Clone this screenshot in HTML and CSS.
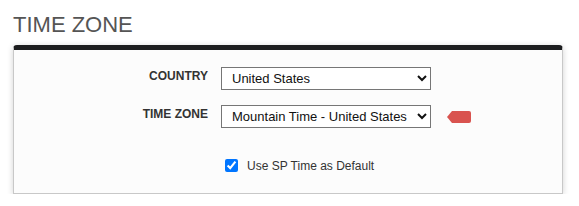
FILE: index.html
```html
<!DOCTYPE html>
<html>
<head>
<meta charset="utf-8">
<link rel="stylesheet" href="styles.css">
</head>
<body>
<h2 class="title">TIME ZONE</h2>
<div class="panel">
  <div class="form">
    <label class="label" for="country">COUNTRY</label>
    <div class="field">
      <select id="country" class="select">
        <option>United States</option>
      </select>
    </div>
    <label class="label" for="tz">TIME ZONE</label>
    <div class="field">
      <select id="tz" class="select">
        <option>Mountain Time - United States</option>
      </select>
      <svg class="tag" width="24" height="12" viewBox="0 0 24 12"><path d="M0 6 L5 0 H22 Q24 0 24 2 V10 Q24 12 22 12 H5 Z" fill="#d9534f"/></svg>
    </div>
    <div class="check-row">
      <input type="checkbox" id="sp" class="check" checked>
      <label for="sp" class="check-label">Use SP Time as Default</label>
    </div>
  </div>
</div>
</body>
</html>
```

FILE: styles.css
```css
html, body {
  margin: 0;
  padding: 0;
  background: #fff;
}
body {
  padding: 0 13px;
  font-family: "Liberation Sans", Arial, sans-serif;
}
.title {
  margin: 12px 0 7px;
  font-size: 22px;
  line-height: 26px;
  font-weight: normal;
  color: #555;
}
.panel {
  width: 550px;
  box-sizing: border-box;
  background: #fcfcfc;
  border: 1px solid #c8c8c8;
  border-top: 5px solid #1c1d1f;
  border-radius: 4px 4px 0 0;
  box-shadow: 0 1px 6px rgba(0, 0, 0, 0.18);
}
.form {
  display: grid;
  grid-template-columns: 194px auto;
  column-gap: 13px;
  row-gap: 15px;
  padding: 17px 0 18px;
}
.label {
  text-align: right;
  font-size: 12px;
  line-height: 14px;
  font-weight: bold;
  color: #333;
  padding-top: 2px;
}
.field {
  display: flex;
  align-items: center;
  gap: 16px;
}
.select {
  width: 210px;
  height: 23px;
  box-sizing: border-box;
  font-family: "Liberation Sans", Arial, sans-serif;
  font-size: 13px;
  color: #111;
  background: #fff;
  border: 1px solid #767676;
  border-radius: 0;
  padding: 0 4px 0 6px;
  margin: 0;
}
.tag {
  display: block;
  margin-top: 1px;
}
.check-row {
  grid-column: 2;
  display: flex;
  align-items: center;
  margin-top: 13px;
}
.check {
  width: 13px;
  height: 13px;
  margin: 3px 3px 3px 4px;
}
.check-label {
  font-size: 12px;
  color: #333;
  margin-left: 6px;
  line-height: 14px;
}
```
